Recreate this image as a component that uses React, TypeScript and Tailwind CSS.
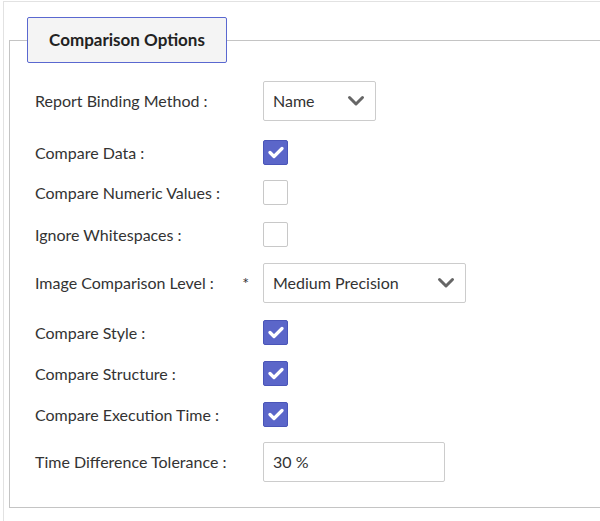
import React from "react";

const Check = ({ on }: { on: boolean }) =>
  on ? (
    <div className="w-[25px] h-[25px] rounded-[2px] bg-[#5b66c9] border border-[#4a55b8] flex items-center justify-center">
      <svg width="16" height="13" viewBox="0 0 16 13"><path d="M2 6.5l4 4L14 2.5" stroke="white" strokeWidth="3.2" fill="none" strokeLinecap="round" strokeLinejoin="round" /></svg>
    </div>
  ) : (
    <div className="w-[25px] h-[25px] rounded-[2px] bg-white border border-[#c8c8c8]" />
  );

const Chevron = () => (
  <svg width="18" height="12" viewBox="0 0 18 12"><path d="M2.5 2.5l6.5 6.5 6.5-6.5" stroke="#666" strokeWidth="3" fill="none" strokeLinecap="round" strokeLinejoin="round" /></svg>
);

function Row({ label, h, mt, children, star }: { label: string; h: number; mt: number; children: React.ReactNode; star?: boolean }) {
  return (
    <div className="flex items-center" style={{ height: h, marginTop: mt }}>
      <div className="w-[228px] shrink-0 flex justify-between pr-[14px]">
        <span>{label}</span>
        {star && <span>*</span>}
      </div>
      {children}
    </div>
  );
}

export default function App() {
  return (
    <div className="w-[600px] h-[521px] bg-white overflow-hidden text-[16px] text-[#333]" style={{ fontFamily: '"Source Sans Pro", Lato, "Noto Sans", sans-serif' }}>
      <div className="border-t border-l border-[#e2e2e2] ml-[3px] mt-[1px] h-full pt-[15px] pl-[5px]">
        <div className="relative">
          <div className="relative z-10 ml-[18px] w-[200px] h-[46px] bg-[#f4f4f4] border border-[#5a68d0] rounded-[2px] flex items-center justify-center font-bold text-[17px] text-[#222]">
            Comparison Options
          </div>
          <div className="-mt-[23px] border border-r-0 border-[#c4c4c4] w-[620px] pl-[25px] pt-[40px] pb-[25px]">
            <Row label="Report Binding Method :" h={40} mt={0}>
              <div className="w-[113px] h-[40px] border border-[#ccc] rounded-[2px] flex items-center justify-between pl-[9px] pr-[10px]">
                <span>Name</span><Chevron />
              </div>
            </Row>
            <Row label="Compare Data :" h={25} mt={19}><Check on /></Row>
            <Row label="Compare Numeric Values :" h={25} mt={15}><Check on={false} /></Row>
            <Row label="Ignore Whitespaces :" h={25} mt={17}><Check on={false} /></Row>
            <Row label="Image Comparison Level :" h={40} mt={16} star>
              <div className="w-[203px] h-[40px] border border-[#ccc] rounded-[2px] flex items-center justify-between pl-[9px] pr-[10px]">
                <span>Medium Precision</span><Chevron />
              </div>
            </Row>
            <Row label="Compare Style :" h={25} mt={17}><Check on /></Row>
            <Row label="Compare Structure :" h={25} mt={16}><Check on /></Row>
            <Row label="Compare Execution Time :" h={25} mt={16}><Check on /></Row>
            <Row label="Time Difference Tolerance :" h={40} mt={15}>
              <div className="w-[182px] h-[40px] border border-[#ccc] rounded-[2px] flex items-center pl-[9px]">30 %</div>
            </Row>
          </div>
        </div>
      </div>
    </div>
  );
}
